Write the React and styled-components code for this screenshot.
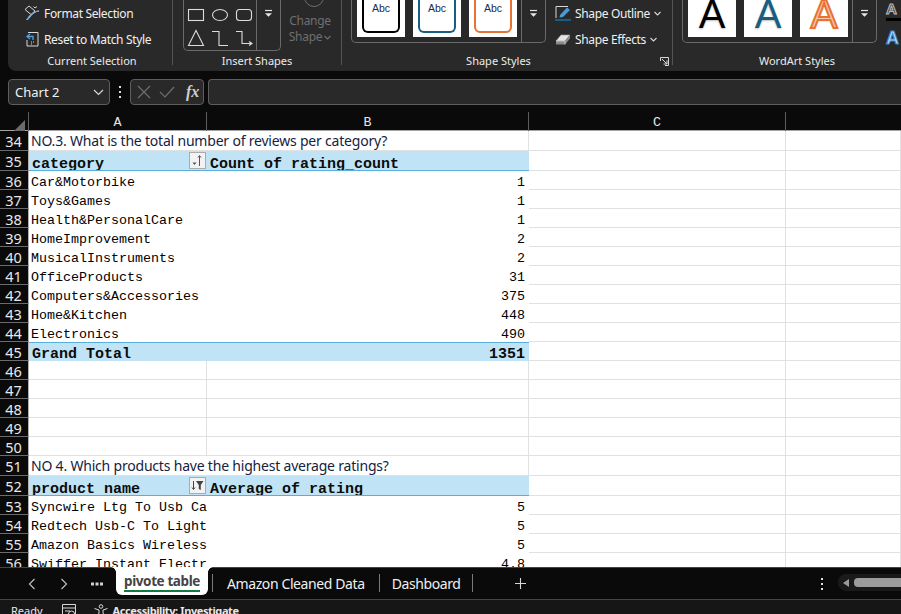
import styled, { createGlobalStyle } from "styled-components";

const Global = createGlobalStyle`
  html, body { margin: 0; padding: 0; background: #0a0a0a; }
  * { box-sizing: border-box; }
`;

const UI = `"Noto Sans", "Open Sans", sans-serif`;
const MONO = `"Liberation Mono", monospace`;

// PAGE
const Page = styled.div`
  width: 901px;
  height: 614px;
  display: flex;
  flex-direction: column;
  overflow: hidden;
  background: #0a0a0a;
  font-family: ${UI};
  color: #f0f0f0;
`;

// RIBBON
const Ribbon = styled.div`
  height: 71px;
  flex: none;
  margin-left: 8px;
  display: flex;
  background: #292929;
  border-bottom-left-radius: 8px;
  overflow: hidden;
`;
const Group = styled.div`
  width: ${(p) => p.$w}px;
  flex: ${(p) => (p.$w ? "none" : 1)};
  height: 71px;
  display: grid;
  grid-template-rows: 53px 16px;
  overflow: hidden;
`;
const GroupBody = styled.div`
  display: flex;
  align-items: flex-start;
  padding-left: ${(p) => p.$pad}px;
  gap: ${(p) => p.$gap || 0}px;
  min-width: 0;
`;
const LabelRow = styled.div`
  display: flex;
  align-items: center;
`;
const GroupLabel = styled.div`
  flex: 1;
  text-align: center;
  font-size: 11px;
  line-height: 16px;
  color: #ececec;
  padding-left: ${(p) => p.$shift || 0}px;
`;
const Launcher = styled.svg`
  width: 9px;
  height: 9px;
  margin: 0 3px 0 5px;
  flex: none;
`;
const Sep = styled.div`
  width: 1px;
  height: 65px;
  flex: none;
  background: #555;
`;
const ToolList = styled.div`
  display: flex;
  flex-direction: column;
`;
const Tool = styled.div`
  height: 26px;
  display: flex;
  align-items: center;
  gap: 4px;
  font-size: 12px;
  letter-spacing: -0.35px;
  white-space: nowrap;
  color: #f0f0f0;
`;
const ToolIcon = styled.svg`
  width: 16px;
  height: 16px;
  flex: none;
`;
const Caret = styled.svg`
  width: 7px;
  height: 5px;
  flex: none;
`;
const GalleryBox = styled.div`
  height: ${(p) => p.$h}px;
  width: ${(p) => p.$w}px;
  flex: none;
  display: flex;
  border: 1px solid #6a6a6a;
  border-top: none;
  border-radius: 0 0 5px 5px;
`;
const ShapeItems = styled.div`
  flex: 1;
  display: grid;
  grid-template-columns: repeat(3, 24px);
  grid-auto-rows: 25px;
  padding-top: 1px;
`;
const ThumbItems = styled.div`
  flex: 1;
  display: flex;
  align-items: flex-start;
  gap: 8px;
  padding-left: 5px;
`;
const GalleryMore = styled.div`
  width: 24px;
  flex: none;
  border-left: 1px solid #6a6a6a;
  display: flex;
  justify-content: center;
  padding-top: ${(p) => p.$top}px;
`;
const Thumb = styled.div`
  width: 48px;
  height: 37px;
  background: #fff;
  flex: none;
  display: flex;
  justify-content: center;
  align-items: flex-end;
  overflow: hidden;
  padding: ${(p) => (p.$art ? "0 0 9px" : "0 5px 4px")};
`;
const AbcFrame = styled.div`
  width: 100%;
  height: 36px;
  display: flex;
  justify-content: center;
  padding-top: 4px;
  border: 2px solid ${(p) => p.$color};
  border-top: none;
  border-radius: 0 0 6px 6px;
  font-family: "Liberation Sans", sans-serif;
  font-size: 10.5px;
  line-height: 14px;
  color: #24284e;
`;
const ArtLetter = styled.span`
  font-family: "Liberation Sans", sans-serif;
  font-size: 40px;
  line-height: 28px;
  color: ${(p) => p.$fill};
  -webkit-text-stroke: ${(p) => (p.$stroke ? `2px ${p.$stroke}` : "0")};
  text-shadow: 0 1px 2px rgba(0, 0, 0, 0.25);
`;
const ChangeShape = styled.div`
  width: 42px;
  margin-left: 8px;
  display: flex;
  flex-direction: column;
  align-items: center;
  font-size: 12px;
  letter-spacing: -0.3px;
  line-height: 16px;
  color: #6f6f6f;
`;
const ChangeCircle = styled.div`
  width: 20px;
  height: 20px;
  margin: -13px 0 6px 8px;
  border: 1.5px solid #6f6f6f;
  border-radius: 50%;
`;
const ShapeLine = styled.div`
  display: flex;
  align-items: center;
  gap: 2px;
`;
const SideLetters = styled.div`
  display: flex;
  flex-direction: column;
  gap: 9px;
  margin-left: 9px;
  flex: none;
  width: 20px;
`;
const SideLetter = styled.span`
  font-family: "Liberation Sans", sans-serif;
  font-weight: bold;
  font-size: ${(p) => p.$size}px;
  line-height: ${(p) => p.$h - 3}px;
  height: ${(p) => p.$h}px;
  color: ${(p) => p.$fill};
  -webkit-text-stroke: 1px ${(p) => p.$stroke};
  border-bottom: ${(p) => (p.$bar ? "3px solid #000" : "none")};
`;

// FORMULA BAR
const FormulaBar = styled.div`
  height: 26px;
  flex: none;
  margin-top: 8px;
  display: flex;
  align-items: stretch;
  padding-left: 8px;
`;
const NameBox = styled.div`
  width: 102px;
  display: flex;
  align-items: center;
  justify-content: space-between;
  padding: 0 5px 0 6px;
  background: #292929;
  border: 1px solid #5e5e5e;
  border-radius: 4px;
  font-size: 13px;
  color: #f2f2f2;
`;
const BarDots = styled.div`
  width: 20px;
  display: flex;
  flex-direction: column;
  align-items: center;
  justify-content: center;
  gap: 3px;
  span {
    width: 2px;
    height: 2px;
    background: #ddd;
  }
`;
const FormulaButtons = styled.div`
  width: 74px;
  display: flex;
  align-items: center;
  gap: 8px;
  padding-left: 6px;
  background: #292929;
  border: 1px solid #5e5e5e;
  border-radius: 4px;
`;
const FxMark = styled.span`
  margin-left: 3px;
  font-family: "Liberation Serif", serif;
  font-style: italic;
  font-weight: bold;
  font-size: 16px;
  color: #cfcfcf;
`;
const FormulaInput = styled.div`
  flex: 1;
  margin-left: 4px;
  background: #292929;
  border: 1px solid #5e5e5e;
  border-right: none;
  border-radius: 4px 0 0 4px;
`;

// SHEET
const Columns = "29px 178px 322px 257px 1fr";
const ColumnHead = styled.div`
  height: 19px;
  margin-top: 7px;
  flex: none;
  display: grid;
  grid-template-columns: ${Columns};
  border-bottom: 1px solid #a4a4a4;
`;
const Corner = styled.div`
  border-right: 1px solid #5e5e5e;
  display: flex;
  justify-content: flex-end;
  align-items: flex-end;
  padding: 0 3px 2px 0;
  &::after {
    content: "";
    width: 0;
    height: 0;
    border-left: 11px solid transparent;
    border-bottom: 11px solid #6b6b6b;
  }
`;
const ColumnLetter = styled.div`
  border-right: 1px solid #5e5e5e;
  text-align: center;
  font-family: ${MONO};
  font-size: 13.33px;
  line-height: 21px;
  color: #e6e6e6;
`;
const Sheet = styled.div`
  flex: 1;
  min-height: 0;
  overflow: hidden;
`;
const Row = styled.div`
  height: ${(p) => p.$h}px;
  display: grid;
  grid-template-columns: ${Columns};
`;
const RowHead = styled.div`
  background: #0a0a0a;
  border-right: 1px solid #b0b0b0;
  border-bottom: 1px solid #6b6b6b;
  font-size: 14.5px;
  line-height: 20px;
  text-align: center;
  color: #e8e8e8;
  padding-right: 1px;
  overflow: hidden;
`;
const Cell = styled.div`
  background: #fff;
  border-right: 1px solid #e1e1e1;
  border-bottom: 1px solid #e1e1e1;
  overflow: hidden;
  white-space: nowrap;
`;
const Note = styled(Cell)`
  grid-column: span 2;
  padding-left: 2px;
  font-size: 14px;
  letter-spacing: -0.2px;
  line-height: 19px;
  color: #14233f;
`;
const Plain = styled.div`
  background: #fff;
  overflow: hidden;
  white-space: nowrap;
  font-family: ${MONO};
  font-size: 13.33px;
  line-height: 23px;
  color: #000;
  padding: 0 4px 0 2px;
  text-align: ${(p) => (p.$right ? "right" : "left")};
`;
const Pivot = styled.div`
  background: #c0e4f5;
  overflow: hidden;
  white-space: nowrap;
  display: flex;
  justify-content: ${(p) => (p.$right ? "flex-end" : "space-between")};
  align-items: center;
  font-family: ${MONO};
  font-weight: bold;
  font-size: 15px;
  line-height: 19px;
  color: #0c0c0c;
  padding: 0 4px 0 3px;
  border-top: ${(p) => (p.$top ? "1px solid #5aaedb" : "none")};
  border-bottom: ${(p) => (p.$bottom ? "1px solid #5aaedb" : "none")};
`;
const PivotLabel = styled.span`
  padding-top: ${(p) => (p.$low ? 7 : 4)}px;
`;
const SortButton = styled.div`
  width: 17px;
  height: 17px;
  margin-right: -3px;
  flex: none;
  background: #f2f2f2;
  border: 1px solid #ababab;
  display: flex;
  align-items: center;
  justify-content: center;
`;

// TABS
const TabBar = styled.div`
  height: 32px;
  flex: none;
  display: flex;
  align-items: flex-start;
  background: #0a0a0a;
  border-top: 1px solid #454545;
  font-size: 14px;
`;
const NavArea = styled.div`
  width: 116px;
  flex: none;
  height: 31px;
  padding-left: 27px;
  display: flex;
  align-items: center;
  gap: 22px;
`;
const ActiveTab = styled.div`
  width: 92px;
  height: 28px;
  flex: none;
  margin-top: -1px;
  padding: 5px 8px 0;
  background: #fff;
  border-radius: 0 0 6px 6px;
  font-weight: 700;
  font-size: 13.5px;
  letter-spacing: -0.4px;
  line-height: 18px;
  text-align: center;
  color: #444;
  white-space: nowrap;
  position: relative;
  &::before,
  &::after {
    content: "";
    position: absolute;
    top: 0;
    width: 5px;
    height: 5px;
  }
  &::before {
    left: -5px;
    background: radial-gradient(circle at 0 100%, transparent 4.5px, #fff 5px);
  }
  &::after {
    right: -5px;
    background: radial-gradient(circle at 100% 100%, transparent 4.5px, #fff 5px);
  }
`;
const TabLine = styled.div`
  height: 2px;
  background: #107c41;
`;
const Tab = styled.div`
  height: 31px;
  line-height: 31px;
  padding: 0 ${(p) => p.$right || 14}px 0 ${(p) => p.$left || 14}px;
  letter-spacing: -0.4px;
  white-space: nowrap;
  color: #f0f0f0;
`;
const TabSep = styled.div`
  width: 1px;
  height: 18px;
  margin: 6px 0 0 ${(p) => p.$left || 0}px;
  flex: none;
  background: #7a7a7a;
`;
const AddTab = styled.div`
  margin-left: 41px;
  height: 31px;
  display: flex;
  align-items: center;
`;
const TabDots = styled.div`
  margin-left: auto;
  width: 12px;
  height: 31px;
  display: flex;
  flex-direction: column;
  align-items: center;
  justify-content: center;
  gap: 3px;
  span {
    width: 2px;
    height: 2px;
    background: #e0e0e0;
  }
`;
const ScrollTrack = styled.div`
  width: 63px;
  height: 17px;
  margin: 6px 0 0 10px;
  flex: none;
  display: flex;
  align-items: center;
  gap: 5px;
  padding-left: 5px;
  background: #1a1a1a;
  border-radius: 8px 0 0 8px;
`;
const ScrollArrow = styled.div`
  width: 0;
  height: 0;
  border-top: 4px solid transparent;
  border-bottom: 4px solid transparent;
  border-right: 6px solid #9c9c9c;
`;
const ScrollThumb = styled.div`
  flex: 1;
  height: 9px;
  background: #9c9c9c;
  border-radius: 4px 0 0 4px;
`;

// STATUS
const StatusBar = styled.div`
  height: 15px;
  flex: none;
  display: flex;
  align-items: flex-start;
  background: #161616;
  border-top: 1px solid #454545;
  font-size: 11px;
  overflow: hidden;
  white-space: nowrap;
`;
const StatusText = styled.span`
  margin-left: ${(p) => p.$left}px;
  line-height: 21px;
  font-weight: ${(p) => (p.$bold ? 700 : 400)};
  letter-spacing: ${(p) => (p.$bold ? "-0.4px" : "0")};
  color: #e8e8e8;
`;
const StatusIcon = styled.svg`
  width: 16px;
  height: 16px;
  margin-left: ${(p) => p.$left}px;
  margin-top: 3px;
  flex: none;
`;

const caret = (
  <Caret viewBox="0 0 7 5">
    <path d="M0.5 1 L3.5 4 L6.5 1" fill="none" stroke="#d8d8d8" strokeWidth="1.1" />
  </Caret>
);

const MoreGlyph = () => (
  <svg width="9" height="9" viewBox="0 0 9 9">
    <path d="M1 1.5H8" stroke="#e6e6e6" strokeWidth="1.2" />
    <path d="M1 4.2H8L4.5 7.8Z" fill="#e6e6e6" />
  </svg>
);

const ShapeIcon = ({ d, children }) => (
  <svg width="24" height="24" viewBox="0 0 24 24" fill="none" stroke="#dcdcdc" strokeWidth="1.1">
    {d ? <path d={d} /> : children}
  </svg>
);

const category = [
  ["Car&Motorbike", 1],
  ["Toys&Games", 1],
  ["Health&PersonalCare", 1],
  ["HomeImprovement", 2],
  ["MusicalInstruments", 2],
  ["OfficeProducts", 31],
  ["Computers&Accessories", 375],
  ["Home&Kitchen", 448],
  ["Electronics", 490],
];

const products = [
  ["Syncwire Ltg To Usb Ca", 5],
  ["Redtech Usb-C To Light", 5],
  ["Amazon Basics Wireless", 5],
  ["Swiffer Instant Electr", "4.8"],
];

const SortIcon = ({ filtered }) => (
  <svg width="13" height="13" viewBox="0 0 13 13">
    {filtered ? (
      <>
        <path d="M5 2H12.5L9.8 6V11L7.8 10V6Z" fill="#444" />
        <path d="M2.5 2V10M1 8.5L2.5 10.5L4 8.5" stroke="#444" fill="none" />
      </>
    ) : (
      <>
        <path d="M8.5 12V2M7 3.5L8.5 1.5L10 3.5" stroke="#555" fill="none" />
        <path d="M1.5 8.5H5.5L3.5 11Z" fill="#555" />
      </>
    )}
  </svg>
);

const EmptyTail = () => (
  <>
    <Cell />
    <Cell />
  </>
);

const NoteRow = ({ n, h, children }) => (
  <Row $h={h}>
    <RowHead>{n}</RowHead>
    <Note>{children}</Note>
    <EmptyTail />
  </Row>
);

const PivotHead = ({ n, h, label, value, filtered }) => (
  <Row $h={h}>
    <RowHead>{n}</RowHead>
    <Pivot $bottom>
      <PivotLabel $low>{label}</PivotLabel>
      <SortButton>
        <SortIcon filtered={filtered} />
      </SortButton>
    </Pivot>
    <Pivot $bottom>
      <PivotLabel $low>{value}</PivotLabel>
    </Pivot>
    <EmptyTail />
  </Row>
);

const DataRow = ({ n, label, value }) => (
  <Row $h={19}>
    <RowHead>{n}</RowHead>
    <Plain>{label}</Plain>
    <Plain $right>{value}</Plain>
    <EmptyTail />
  </Row>
);

const App = () => {
  return (
    <Page>
      <Global />
      <Ribbon>
        <Group $w={164}>
          <GroupBody $pad={16}>
            <ToolList>
              <Tool>
                <ToolIcon viewBox="0 0 16 16">
                  <path d="M1 4.5L5 1L11 6L7 9.5Z" fill="none" stroke="#d8d8d8" />
                  <path d="M11 3L13 1.5M9.5 1.5L11 3" fill="none" stroke="#d8d8d8" />
                  <path d="M15 6C12 6 8 9 6 12C5 14 3 15 2.5 14.5C4 14 4.5 11 6.5 10C9 8 12 6 15 6Z" fill="#7fb4dc" stroke="#7fb4dc" />
                </ToolIcon>
                Format Selection
              </Tool>
              <Tool>
                <ToolIcon viewBox="0 0 16 16">
                  <path d="M4 1.5H14V15H3V9" fill="none" stroke="#d8d8d8" />
                  <path d="M6 3L3 5.5L6 8" fill="none" stroke="#4aa3e0" strokeWidth="1.3" />
                  <path d="M3 5.5H9V9" fill="none" stroke="#4aa3e0" strokeWidth="1.3" />
                  <path d="M7 11H11M7 13H9" stroke="#d8d8d8" strokeDasharray="1 1" />
                </ToolIcon>
                Reset to Match Style
              </Tool>
            </ToolList>
          </GroupBody>
          <GroupLabel $shift={4}>Current Selection</GroupLabel>
        </Group>
        <Sep />
        <Group $w={168}>
          <GroupBody $pad={10}>
            <GalleryBox $w={98} $h={51}>
              <ShapeItems>
                <ShapeIcon>
                  <rect x="4.5" y="8.5" width="15" height="11" />
                </ShapeIcon>
                <ShapeIcon>
                  <ellipse cx="12" cy="14" rx="7.5" ry="5.5" />
                </ShapeIcon>
                <ShapeIcon>
                  <rect x="4.5" y="8.5" width="15" height="11" rx="3" />
                </ShapeIcon>
                <ShapeIcon d="M4.5 19.5L12 4.5L19.5 19.5Z" />
                <ShapeIcon d="M4 5.5H11V19.5H20" />
                <ShapeIcon d="M4 5.5H10V17.5H19M17 15.5L20 17.5L17 19.5" />
              </ShapeItems>
              <GalleryMore $top={9}>
                <MoreGlyph />
              </GalleryMore>
            </GalleryBox>
            <ChangeShape>
              <ChangeCircle />
              <span>Change</span>
              <ShapeLine>
                Shape
                <Caret viewBox="0 0 7 5">
                  <path d="M0.5 1 L3.5 4 L6.5 1" fill="none" stroke="#6f6f6f" strokeWidth="1.1" />
                </Caret>
              </ShapeLine>
            </ChangeShape>
          </GroupBody>
          <GroupLabel>Insert Shapes</GroupLabel>
        </Group>
        <Sep />
        <Group $w={330}>
          <GroupBody $pad={9} $gap={9}>
            <GalleryBox $w={195} $h={43}>
              <ThumbItems>
                <Thumb>
                  <AbcFrame $color="#000">Abc</AbcFrame>
                </Thumb>
                <Thumb>
                  <AbcFrame $color="#156082">Abc</AbcFrame>
                </Thumb>
                <Thumb>
                  <AbcFrame $color="#e97132">Abc</AbcFrame>
                </Thumb>
              </ThumbItems>
              <GalleryMore $top={9}>
                <MoreGlyph />
              </GalleryMore>
            </GalleryBox>
            <ToolList>
              <Tool>
                <ToolIcon viewBox="0 0 16 16">
                  <path d="M1 1.5H13M1 1.5V13" fill="none" stroke="#d8d8d8" />
                  <path d="M5 10L12 2.5L15 5L8 12L4.5 12.5Z" fill="#4a9bd4" />
                  <rect x="0" y="14" width="16" height="2.5" fill="#156082" />
                </ToolIcon>
                Shape Outline {caret}
              </Tool>
              <Tool>
                <ToolIcon viewBox="0 0 16 16">
                  <path d="M1 10L6 4H15L10 10Z" fill="#e4e4e4" stroke="#9a9a9a" strokeWidth="0.6" />
                  <path d="M1 10V13.5H10L15 7.5V4L10 10Z" fill="#8a8a8a" />
                  <path d="M1 10H10V13.5" fill="none" stroke="#d8d8d8" strokeWidth="0.7" />
                </ToolIcon>
                Shape Effects {caret}
              </Tool>
            </ToolList>
          </GroupBody>
          <LabelRow>
            <GroupLabel>Shape Styles</GroupLabel>
            <Launcher viewBox="0 0 9 9">
              <path d="M0.5 4V0.5H8.5V8.5H5M2 2L7 7M7 3.5V7H3.5" fill="none" stroke="#d8d8d8" />
            </Launcher>
          </LabelRow>
        </Group>
        <Sep />
        <Group>
          <GroupBody $pad={9}>
            <GalleryBox $w={195} $h={43}>
              <ThumbItems>
                <Thumb $art>
                  <ArtLetter $fill="#000">A</ArtLetter>
                </Thumb>
                <Thumb $art>
                  <ArtLetter $fill="#156082">A</ArtLetter>
                </Thumb>
                <Thumb $art>
                  <ArtLetter $fill="#f8c7aa" $stroke="#e97132">
                    A
                  </ArtLetter>
                </Thumb>
              </ThumbItems>
              <GalleryMore $top={9}>
                <MoreGlyph />
              </GalleryMore>
            </GalleryBox>
            <SideLetters>
              <SideLetter $h={21} $size={15} $fill="#333" $stroke="#bdbdbd" $bar>
                A
              </SideLetter>
              <SideLetter $h={20} $size={18} $fill="#bcdcf5" $stroke="#2f86d1">
                A
              </SideLetter>
            </SideLetters>
          </GroupBody>
          <GroupLabel $shift={20}>WordArt Styles</GroupLabel>
        </Group>
      </Ribbon>

      <FormulaBar>
        <NameBox>
          Chart 2
          <svg width="11" height="7" viewBox="0 0 11 7">
            <path d="M1 1L5.5 5.5L10 1" fill="none" stroke="#d8d8d8" strokeWidth="1.2" />
          </svg>
        </NameBox>
        <BarDots>
          <span />
          <span />
          <span />
        </BarDots>
        <FormulaButtons>
          <svg width="14" height="14" viewBox="0 0 14 14">
            <path d="M1 1L13 13M13 1L1 13" stroke="#6e6e6e" strokeWidth="1.2" />
          </svg>
          <svg width="16" height="14" viewBox="0 0 16 14">
            <path d="M1 7L6 12L15 2" fill="none" stroke="#6e6e6e" strokeWidth="1.2" />
          </svg>
          <FxMark>fx</FxMark>
        </FormulaButtons>
        <FormulaInput />
      </FormulaBar>

      <ColumnHead>
        <Corner />
        <ColumnLetter>A</ColumnLetter>
        <ColumnLetter>B</ColumnLetter>
        <ColumnLetter>C</ColumnLetter>
        <div />
      </ColumnHead>

      <Sheet>
        <NoteRow n={34} h={20}>
          NO.3. What is the total number of reviews per category?
        </NoteRow>
        <PivotHead n={35} h={20} label="category" value="Count of rating_count" />
        {category.map(([label, value], i) => (
          <DataRow key={label} n={36 + i} label={label} value={value} />
        ))}
        <Row $h={19}>
          <RowHead>45</RowHead>
          <Pivot $top>
            <PivotLabel>Grand Total</PivotLabel>
          </Pivot>
          <Pivot $top $right>
            <PivotLabel>1351</PivotLabel>
          </Pivot>
          <EmptyTail />
        </Row>
        {[46, 47, 48, 49, 50].map((n) => (
          <Row $h={19} key={n}>
            <RowHead>{n}</RowHead>
            <Cell />
            <Cell />
            <EmptyTail />
          </Row>
        ))}
        <NoteRow n={51} h={20}>
          NO 4. Which products have the highest average ratings?
        </NoteRow>
        <PivotHead n={52} h={20} label="product name" value="Average of rating" filtered />
        {products.map(([label, value], i) => (
          <DataRow key={label} n={53 + i} label={label} value={value} />
        ))}
      </Sheet>

      <TabBar>
        <NavArea>
          <svg width="10" height="12" viewBox="0 0 10 12">
            <path d="M7.5 1L2.5 6L7.5 11" fill="none" stroke="#bdbdbd" strokeWidth="1.2" />
          </svg>
          <svg width="10" height="12" viewBox="0 0 10 12">
            <path d="M2.5 1L7.5 6L2.5 11" fill="none" stroke="#bdbdbd" strokeWidth="1.2" />
          </svg>
          <svg width="12" height="4" viewBox="0 0 12 4">
            <path d="M0 0.5H3V3.5H0ZM4.5 0.5H7.5V3.5H4.5ZM9 0.5H12V3.5H9Z" fill="#d0d0d0" />
          </svg>
        </NavArea>
        <ActiveTab>
          pivote table
          <TabLine />
        </ActiveTab>
        <TabSep $left={4} />
        <Tab>Amazon Cleaned Data</Tab>
        <TabSep />
        <Tab $left={12} $right={11}>
          Dashboard
        </Tab>
        <TabSep />
        <AddTab>
          <svg width="13" height="13" viewBox="0 0 13 13">
            <path d="M6.5 1V12M1 6.5H12" stroke="#d8d8d8" strokeWidth="1.1" />
          </svg>
        </AddTab>
        <TabDots>
          <span />
          <span />
          <span />
        </TabDots>
        <ScrollTrack>
          <ScrollArrow />
          <ScrollThumb />
        </ScrollTrack>
      </TabBar>

      <StatusBar>
        <StatusText $left={11}>Ready</StatusText>
        <StatusIcon $left={18} viewBox="0 0 16 16">
          <path d="M1.5 14V1.5H14.5V14M1.5 5H14.5M4 8H9" fill="none" stroke="#d8d8d8" />
          <circle cx="10.5" cy="11" r="3" fill="none" stroke="#d8d8d8" />
        </StatusIcon>
        <StatusIcon $left={16} viewBox="0 0 16 16">
          <circle cx="8" cy="3.5" r="1.8" fill="none" stroke="#d8d8d8" />
          <path d="M1.5 5.5L6 7V10L3.5 15M14.5 5.5L10 7V10L12.5 15" fill="none" stroke="#d8d8d8" />
        </StatusIcon>
        <StatusText $left={4} $bold>
          Accessibility: Investigate
        </StatusText>
      </StatusBar>
    </Page>
  );
};

export default App;
